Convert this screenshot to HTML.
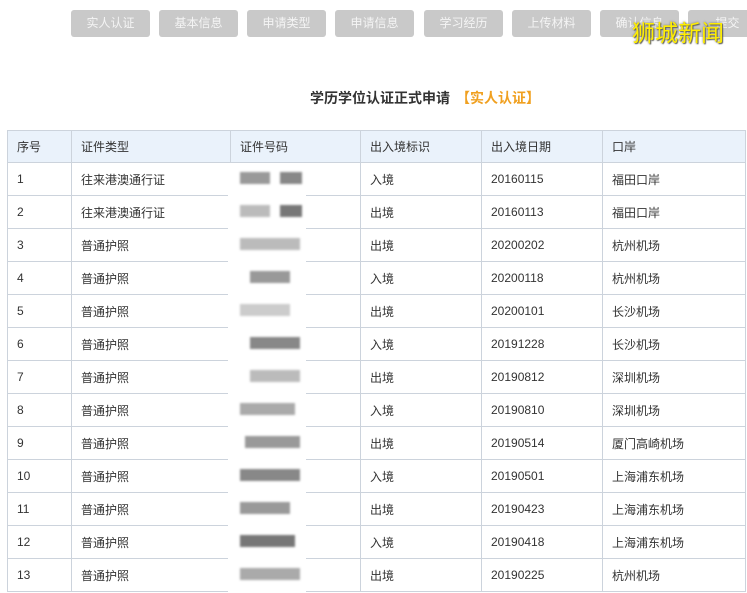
<!DOCTYPE html>
<html><head><meta charset="utf-8"><style>
body{margin:0;width:747px;height:593px;background:#fff;position:relative;overflow:hidden;font-family:"Liberation Sans","Noto Sans CJK SC",sans-serif;}
.btn{position:absolute;top:10px;height:27px;width:79px;background:#c9c9c9;border-radius:3px;color:#f4f4f4;font-size:12px;line-height:27px;text-align:center;}
.title{position:absolute;top:88px;left:310px;white-space:nowrap;font-size:14px;font-weight:bold;color:#333;}
.title span{color:#f0a020;margin-left:6px}
table{position:absolute;left:7px;top:130px;border-collapse:collapse;font-size:12px;color:#333;}
td{border:1px solid #ccd3dc;height:33px;padding:0 0 0 9px;box-sizing:border-box;}
tr.h td{background:#eaf2fb;height:32px}
.wm{position:absolute;left:632px;top:14px;font-size:23px;color:#ffee00;text-shadow:0 0 2px #776,1px 1px 1px #555;}
.blur{position:absolute;background:#fff;left:228px;top:163px;width:78px;height:430px;}
.px{position:absolute;height:12px;filter:blur(1px);}
</style></head><body>
<div class="btn" style="left:71px">实人认证</div>
<div class="btn" style="left:159px">基本信息</div>
<div class="btn" style="left:247px">申请类型</div>
<div class="btn" style="left:335px">申请信息</div>
<div class="btn" style="left:424px">学习经历</div>
<div class="btn" style="left:512px">上传材料</div>
<div class="btn" style="left:600px">确认信息</div>
<div class="btn" style="left:688px">提交</div>
<div class="wm">狮城新闻</div>
<div class="title">学历学位认证正式申请<span>【实人认证】</span></div>
<table>
<colgroup><col width="64"><col width="159"><col width="130"><col width="121"><col width="121"><col width="143"></colgroup>
<tr class="h"><td>序号</td><td>证件类型</td><td>证件号码</td><td>出入境标识</td><td>出入境日期</td><td>口岸</td></tr>
<tr><td>1</td><td>往来港澳通行证</td><td></td><td>入境</td><td>20160115</td><td>福田口岸</td></tr>
<tr><td>2</td><td>往来港澳通行证</td><td></td><td>出境</td><td>20160113</td><td>福田口岸</td></tr>
<tr><td>3</td><td>普通护照</td><td></td><td>出境</td><td>20200202</td><td>杭州机场</td></tr>
<tr><td>4</td><td>普通护照</td><td></td><td>入境</td><td>20200118</td><td>杭州机场</td></tr>
<tr><td>5</td><td>普通护照</td><td></td><td>出境</td><td>20200101</td><td>长沙机场</td></tr>
<tr><td>6</td><td>普通护照</td><td></td><td>入境</td><td>20191228</td><td>长沙机场</td></tr>
<tr><td>7</td><td>普通护照</td><td></td><td>出境</td><td>20190812</td><td>深圳机场</td></tr>
<tr><td>8</td><td>普通护照</td><td></td><td>入境</td><td>20190810</td><td>深圳机场</td></tr>
<tr><td>9</td><td>普通护照</td><td></td><td>出境</td><td>20190514</td><td>厦门高崎机场</td></tr>
<tr><td>10</td><td>普通护照</td><td></td><td>入境</td><td>20190501</td><td>上海浦东机场</td></tr>
<tr><td>11</td><td>普通护照</td><td></td><td>出境</td><td>20190423</td><td>上海浦东机场</td></tr>
<tr><td>12</td><td>普通护照</td><td></td><td>入境</td><td>20190418</td><td>上海浦东机场</td></tr>
<tr><td>13</td><td>普通护照</td><td></td><td>出境</td><td>20190225</td><td>杭州机场</td></tr>
</table>
<div class="blur"></div>
<div class="px" style="left:240px;top:172px;width:30px;background:#999"></div><div class="px" style="left:280px;top:172px;width:22px;background:#888"></div>
<div class="px" style="left:240px;top:205px;width:30px;background:#bbb"></div><div class="px" style="left:280px;top:205px;width:22px;background:#777"></div>
<div class="px" style="left:240px;top:238px;width:60px;background:#bbb"></div>
<div class="px" style="left:250px;top:271px;width:40px;background:#999"></div>
<div class="px" style="left:240px;top:304px;width:50px;background:#ccc"></div>
<div class="px" style="left:250px;top:337px;width:50px;background:#888"></div>
<div class="px" style="left:250px;top:370px;width:50px;background:#bbb"></div>
<div class="px" style="left:240px;top:403px;width:55px;background:#aaa"></div>
<div class="px" style="left:245px;top:436px;width:55px;background:#999"></div>
<div class="px" style="left:240px;top:469px;width:60px;background:#888"></div>
<div class="px" style="left:240px;top:502px;width:50px;background:#999"></div>
<div class="px" style="left:240px;top:535px;width:55px;background:#777"></div>
<div class="px" style="left:240px;top:568px;width:60px;background:#aaa"></div>
</body></html>
